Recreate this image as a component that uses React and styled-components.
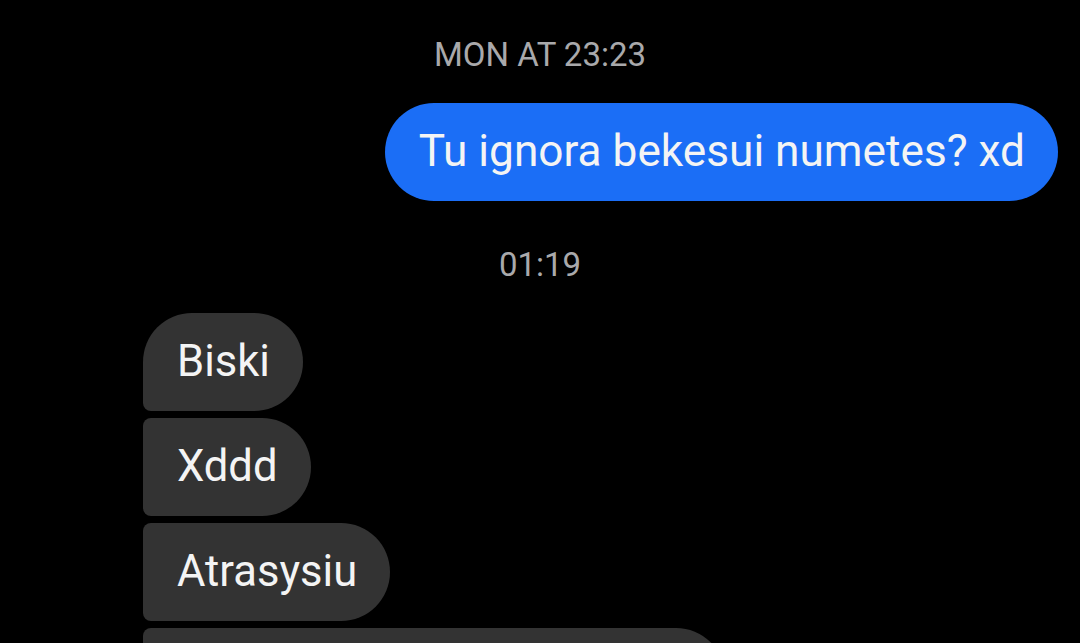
import React from "react";
import styled, { createGlobalStyle } from "styled-components";

const Global = createGlobalStyle`
  html, body { margin: 0; padding: 0; background: #000; }
  body { font-family: Roboto, "Noto Sans", sans-serif; -webkit-font-smoothing: antialiased; }
`;

const Thread = styled.div`
  display: flex;
  flex-direction: column;
  padding: 35px 22px 0 143px;
  background: #000;
  min-height: 643px;
  box-sizing: border-box;
  overflow: hidden;
`;

const Stamp = styled.div`
  align-self: center;
  margin-left: -121px;
  margin-top: ${(p) => p.$top || 0}px;
  margin-bottom: 28px;
  font-size: 33px;
  line-height: 40px;
  color: #a9a9ab;
`;

const Group = styled.div`
  display: flex;
  flex-direction: column;
  align-items: ${(p) => (p.$mine ? "flex-end" : "flex-start")};
  gap: 7px;
`;

const Bubble = styled.div`
  height: 98px;
  box-sizing: border-box;
  display: flex;
  align-items: center;
  padding: 0 33px 2px 34px;
  font-size: ${(p) => (p.$mine ? 44.2 : 43.6)}px;
  color: #f4f4f4;
  white-space: nowrap;
  width: ${(p) => (p.$width ? `${p.$width}px` : "auto")};
  background: ${(p) => (p.$mine ? "#1b6ef6" : "#333333")};
  border-radius: ${(p) => p.$radius};
`;

const received = [
  { id: 1, text: "Biski", radius: "49px 49px 49px 8px" },
  { id: 2, text: "Xddd", radius: "8px 49px 49px 8px" },
  { id: 3, text: "Atrasysiu", radius: "8px 49px 49px 8px" },
  { id: 4, text: "", width: 582, radius: "8px 49px 49px 8px" },
];

export default function App() {
  return (
    <>
      <Global />
      <Thread>
        <Stamp>MON AT 23:23</Stamp>
        <Group $mine>
          <Bubble $mine $radius="49px">Tu ignora bekesui numetes? xd</Bubble>
        </Group>
        <Stamp $top={44}>01:19</Stamp>
        <Group>
          {received.map((m) => (
            <Bubble key={m.id} $radius={m.radius} $width={m.width}>
              {m.text}
            </Bubble>
          ))}
        </Group>
      </Thread>
    </>
  );
}
